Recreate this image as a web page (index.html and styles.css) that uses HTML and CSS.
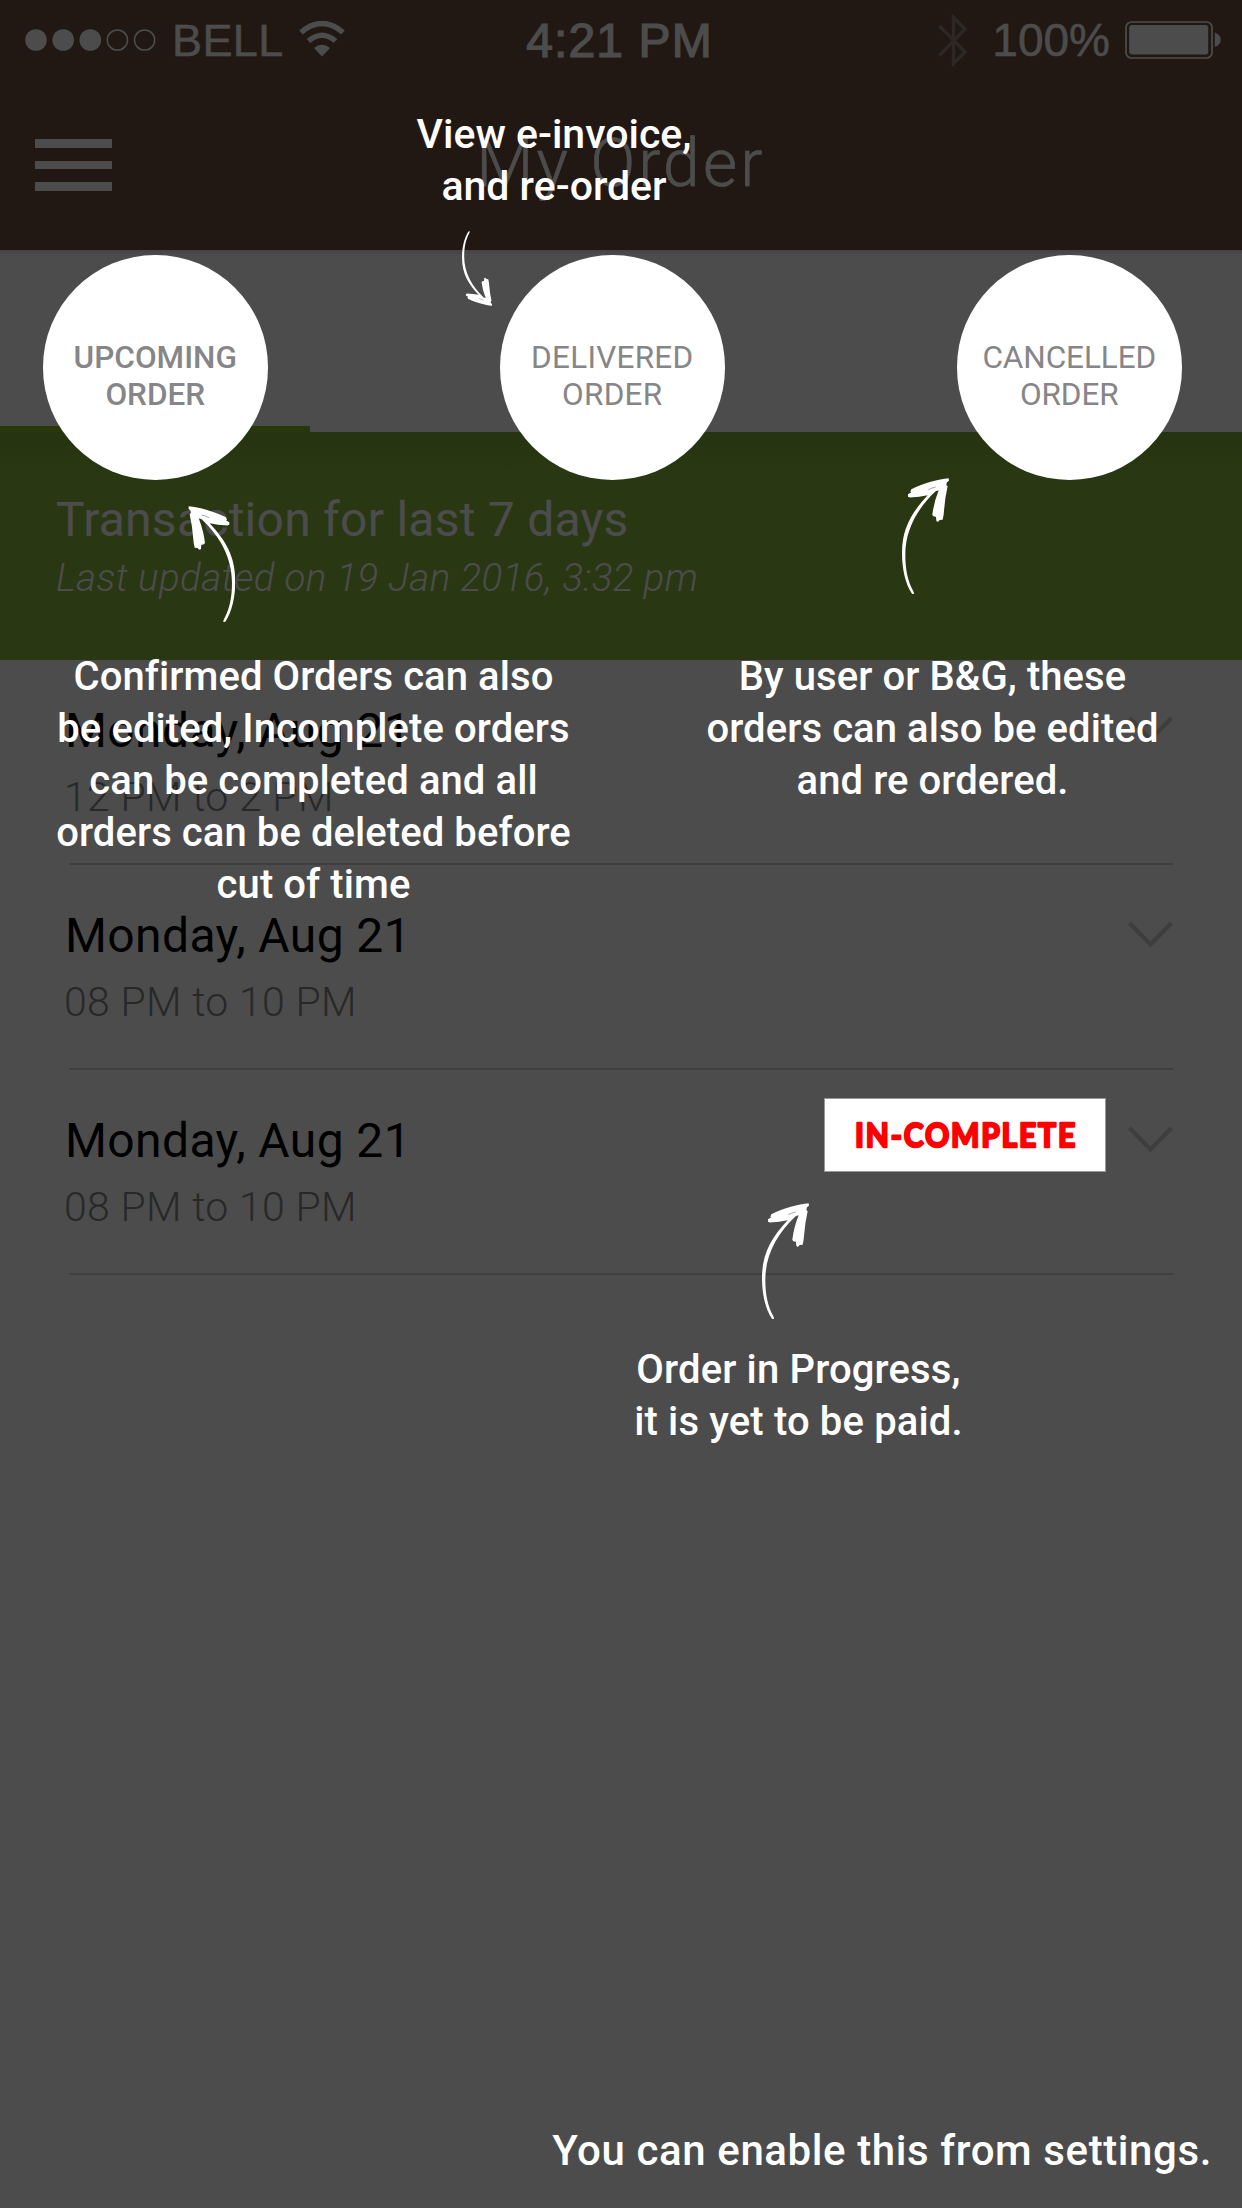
FILE: index.html
```
<!DOCTYPE html>
<html lang="en">
<head>
<meta charset="utf-8">
<title>My Order</title>
<link rel="stylesheet" href="styles.css">
</head>
<body>
<svg class="defs" aria-hidden="true">
  <symbol id="arrow" viewBox="0 0 142 349">
    <path fill="#fff" d="M140 1C110 4 65 15 28 34L25 41L28 43L18 49L18 56L24 58.500Q52 57 77 52C30 103 0 150 0 225C0 275 11 318 29 346Q31 349 36 348Q36 344 34 340C17 308 10 275 10 230C10 155 47 90 101 40L110 37Q95 75 91 111Q94 117 102 116L103 128Q106 133 110 130L113 126L122 125L125 110L126 100Q129 60 137 25L133 21L135 13L141 8Z"/>
    <path stroke="#4b4b4b" stroke-width="1.500" fill="none" d="M79 35Q88 30 101 27"/>
  </symbol>
  <symbol id="chevron" viewBox="0 0 45 28">
    <path d="M1.500 2L22.500 23.500L43.500 2" fill="none" stroke="#cfcfcf" stroke-width="4.300"/>
  </symbol>
</svg>

<div class="screen">
  <header class="header">
    <div class="status">
      <div class="status-left">
        <svg class="dots" width="131" height="22" viewBox="0 0 131 22" fill="#fff">
          <circle cx="11" cy="11" r="10.800"/><circle cx="38.200" cy="11" r="10.800"/><circle cx="65.300" cy="11" r="10.800"/>
          <g fill="none" stroke="#fff" stroke-width="1.500"><circle cx="92.400" cy="11" r="10.100"/><circle cx="119.600" cy="11" r="10.100"/></g>
        </svg>
        <span class="carrier">BELL</span>
        <svg class="wifi" width="46" height="36" viewBox="0 0 46 36" fill="none" stroke="#fff">
          <path d="M2 11.500Q23-6.500 44 11.500" stroke-width="5.500"/>
          <path d="M9.500 20Q23 8.500 36.500 20" stroke-width="5.500"/>
          <path d="M15 27Q23 20.500 31 27L23 35.500Z" fill="#fff" stroke="none"/>
        </svg>
      </div>
      <div class="time">4:21 PM</div>
      <div class="status-right">
        <svg class="bluetooth" width="29" height="53" viewBox="0 0 29 53" fill="none" stroke="#fff" stroke-width="3.200" opacity=".3">
          <path d="M1.500 12L27 38L15.500 49.500V3.500L27 15L1.500 41.500"/>
        </svg>
        <span class="percent">100%</span>
        <svg class="battery" width="96" height="38" viewBox="0 0 96 38">
          <rect x="1" y="1" width="86" height="36" rx="5.500" fill="none" stroke="#fff" stroke-width="1.700"/>
          <rect x="4.200" y="4" width="79" height="29.500" rx="3" fill="#fff"/>
          <path d="M89.800 11.500Q95.700 14 95.700 18.700Q95.700 23.500 89.800 26Z" fill="#fff"/>
        </svg>
      </div>
    </div>
    <div class="nav">
      <div class="menu"><i></i><i></i><i></i></div>
      <h1 class="title">My Order</h1>
    </div>
  </header>
  <div class="tabs"><div class="tab active"></div><div class="tab"></div><div class="tab"></div></div>
  <section class="banner">
    <h2 class="banner-title">Transaction for last 7 days</h2>
    <p class="banner-sub">Last updated on 19 Jan 2016, 3:32 pm</p>
  </section>
  <main class="orders">
    <article class="order">
      <div><h3 class="date">Monday, Aug 21</h3><p class="slot">12 PM to 2 PM</p></div>
      <svg class="chevron"><use href="#chevron"/></svg>
    </article>
    <article class="order">
      <div><h3 class="date">Monday, Aug 21</h3><p class="slot">08 PM to 10 PM</p></div>
      <svg class="chevron"><use href="#chevron"/></svg>
    </article>
    <article class="order">
      <div><h3 class="date">Monday, Aug 21</h3><p class="slot">08 PM to 10 PM</p></div>
      <svg class="chevron"><use href="#chevron"/></svg>
    </article>
  </main>

  <div class="coach">
    <div class="spot spot-upcoming">UPCOMING<br>ORDER</div>
    <div class="spot spot-delivered">DELIVERED<br>ORDER</div>
    <div class="spot spot-cancelled">CANCELLED<br>ORDER</div>

    <p class="tip tip-delivered">View e-invoice,<br>and re-order</p>
    <p class="tip tip-upcoming">Confirmed Orders can also<br>be edited, Incomplete orders<br>can be completed and all<br>orders can be deleted before<br>cut of time</p>
    <p class="tip tip-cancelled">By user or B&amp;G, these<br>orders can also be edited<br>and re ordered.</p>
    <p class="tip tip-progress">Order in Progress,<br>it is yet to be paid.</p>
    <p class="tip tip-settings">You can enable this from settings.</p>

    <svg class="arrow arrow-delivered"><use href="#arrow"/></svg>
    <svg class="arrow arrow-upcoming"><use href="#arrow"/></svg>
    <svg class="arrow arrow-cancelled"><use href="#arrow"/></svg>
    <svg class="arrow arrow-progress"><use href="#arrow"/></svg>

    <div class="badge">
      <svg width="230" height="50" viewBox="0 0 230 50"><text class="badge-text" x="5" y="36.500" textLength="222" lengthAdjust="spacingAndGlyphs">IN-COMPLETE</text></svg>
    </div>
  </div>
</div>
</body>
</html>
```
FILE: styles.css
```
* { box-sizing: border-box; }
body { margin: 0; font-family: Roboto, "Liberation Sans", sans-serif; }
h1, h2, h3, p { margin: 0; font-weight: 400; }
svg { display: block; flex: none; }
.defs { position: absolute; width: 0; height: 0; }

.screen { position: relative; width: 1242px; height: 2208px; overflow: hidden; background: #fff; }

/* Header */
.header { height: 250px; background: #715343; color: #fff; }
.status { display: grid; grid-template-columns: 1fr auto 1fr; align-items: center; height: 80px; padding: 0 21px 0 25px; font-family: "Liberation Sans", Arial, sans-serif; }
.status-left, .status-right { display: flex; align-items: center; }
.status-right { justify-content: flex-end; }
.carrier { margin: 1px 15px 0 16px; font-size: 45px; letter-spacing: .4px; -webkit-text-stroke: .4px #fff; }
.wifi { margin-top: -2px; }
.time { margin-right: 7px; font-size: 48px; letter-spacing: 1.1px; -webkit-text-stroke: 1.2px #fff; }
.bluetooth { margin-right: 25px; }
.percent { margin: 0 15px 0 0; font-size: 46px; -webkit-text-stroke: .4px #fff; }
.nav { display: grid; grid-template-columns: 1fr auto 1fr; align-items: center; height: 170px; padding: 0 35px; }
.menu { display: flex; flex-direction: column; justify-content: space-between; width: 77px; height: 52px; }
.menu i { height: 8.7px; background: #fff; }
.title { margin-top: -3px; margin-right: 0; font-size: 66px; font-weight: 300; line-height: 66px; letter-spacing: 3.2px; -webkit-text-stroke: .6px #fff; }

/* Tabs and banner */
.tabs { display: grid; grid-template-columns: 310px 1fr 1fr; height: 182px; background: linear-gradient(#e2e2e2, #fff 5px); }
.tab.active { border-bottom: 6px solid #89b824; }
.banner { height: 228px; padding: 60px 56px 0; background: linear-gradient(#80ac38, #8bba41 44px); color: #fff; }
.banner-title { font-size: 48px; line-height: 56px; letter-spacing: .26px; }
.banner-sub { margin-top: 8px; font-size: 38.5px; font-weight: 300; font-style: italic; line-height: 44px; letter-spacing: .4px; }

/* Order list */
.orders { padding: 0 69px; }
.order { display: flex; justify-content: space-between; align-items: flex-start; height: 205px; padding-top: 43px; border-bottom: 2px solid #d2d2d2; }
.date { margin-left: -4px; font-size: 48px; line-height: 56px; letter-spacing: .4px; color: #000; }
.slot { margin: 16px 0 0 -5px; font-size: 41px; font-weight: 300; line-height: 44px; letter-spacing: .33px; color: #888; }
.chevron { width: 45px; height: 28px; margin-top: 13px; }

/* Coach marks over the screen */
.coach { position: absolute; inset: 0; background: rgba(0, 0, 0, .7); color: #fff; }
.spot { position: absolute; top: 255px; width: 224.5px; height: 224.5px; padding-top: 84px; border-radius: 50%; background: #fff; color: #868688; font-size: 31.5px; line-height: 37px; text-align: center; }
.spot-upcoming { left: 43px; font-weight: 500; }
.spot-delivered { left: 500px; letter-spacing: .25px; }
.spot-cancelled { left: 957px; letter-spacing: -.1px; }

.tip { position: absolute; font-size: 40px; font-weight: 500; line-height: 52px; letter-spacing: .08px; text-align: center; white-space: nowrap; }
.tip-delivered { left: 354px; top: 108px; width: 400px; font-size: 41px; letter-spacing: 0; }
.tip-upcoming { left: 13.5px; top: 651px; width: 600px; }
.tip-cancelled { left: 682.5px; top: 651px; width: 500px; }
.tip-progress { left: 598.5px; top: 1344px; width: 400px; letter-spacing: .15px; }
.tip-settings { right: 30px; top: 2125px; font-size: 42px; letter-spacing: .6px; }

.arrow { position: absolute; width: 47.3px; height: 116.3px; }
.arrow-delivered { left: 461.7px; top: 231px; width: 30.6px; height: 75px; transform: scaleY(-1); }
.arrow-upcoming { left: 188px; top: 506px; transform: scaleX(-1); }
.arrow-cancelled { left: 902px; top: 478px; }
.arrow-progress { left: 762px; top: 1203px; }

.badge { position: absolute; left: 824px; top: 1098px; display: flex; align-items: center; justify-content: center; width: 282px; height: 74px; border: 1px solid #989898; background: #fff; }
.badge-text { font: 700 32.5px Lato, sans-serif; letter-spacing: 2px; fill: #f00; stroke: #f00; stroke-width: 2.4px; stroke-linejoin: round; }
```
